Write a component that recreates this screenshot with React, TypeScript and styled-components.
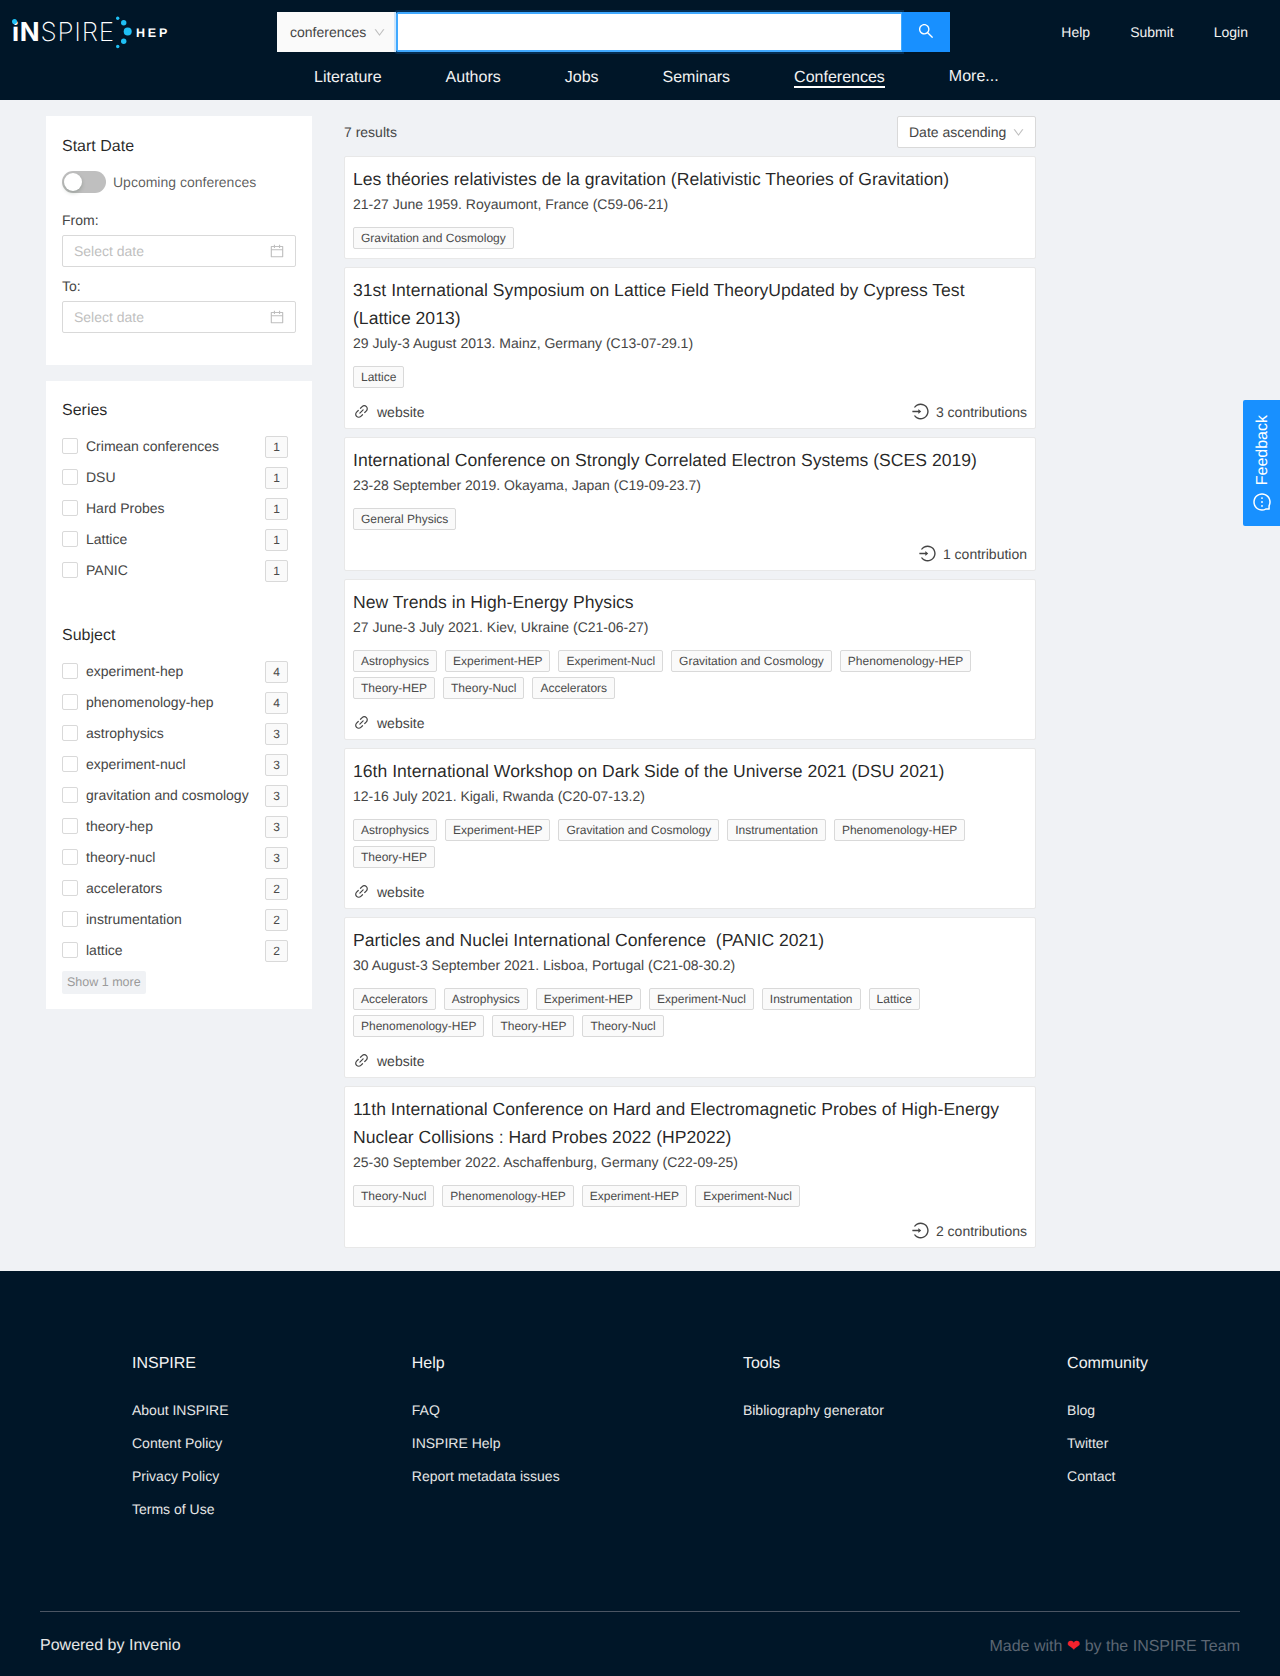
import React from 'react';
import styled, { createGlobalStyle } from 'styled-components';
import {
  AiOutlineCalendar,
  AiOutlineDown,
  AiOutlineLink,
  AiOutlineLogin,
  AiOutlineMessage,
  AiOutlineSearch,
} from 'react-icons/ai';

const GlobalStyle = createGlobalStyle`
  html, body {
    margin: 0;
    padding: 0;
    background: #f0f2f5;
    font-family: "Liberation Sans", Arial, sans-serif;
    font-size: 14px;
    line-height: 22px;
    color: rgba(0, 0, 0, 0.65);
    text-rendering: geometricPrecision;
    font-feature-settings: 'tnum';
  }
  * { box-sizing: border-box; }
`;

const Page = styled.div`
  position: relative;
  width: 1280px;
  min-height: 1676px;
`;

const Header = styled.header`
  height: 100px;
  background: #001628;
  display: grid;
  grid-template-columns: 277px 673px 1fr;
  grid-template-rows: 64px 36px;
`;

const LogoBox = styled.div`
  display: flex;
  align-items: center;
  padding: 2px 0 0 12px;
  color: #fff;
`;

const LogoWord = styled.span`
  font-family: Inter, "Liberation Sans", sans-serif;
  font-size: 26px;
  font-weight: 200;
  letter-spacing: 0.8px;
  line-height: 1;
  b { font-weight: 700; }
`;

const LogoI = styled.span`
  position: relative;
  &::before {
    content: '';
    position: absolute;
    top: 2px;
    left: 0;
    width: 5px;
    height: 5px;
    border-radius: 50%;
    background: #1fc0f5;
  }
`;

const LogoHep = styled.span`
  font-size: 12.5px;
  font-weight: 700;
  letter-spacing: 2.9px;
  margin-left: 3px;
`;

const SearchBar = styled.div`
  display: flex;
  height: 40px;
  margin-top: 12px;
`;

const ScopeSelect = styled.div`
  width: 119px;
  background: #fafafa;
  display: flex;
  align-items: center;
  justify-content: space-between;
  padding: 0 10px 0 13px;
  color: #454545;
  svg { color: #bfbfbf; font-size: 13px; }
`;

const SearchInput = styled.input`
  flex: 1;
  min-width: 0;
  border: 2px solid #40a9ff;
  border-right-width: 1px;
  border-radius: 2px 0 0 2px;
  background: #fff;
  box-shadow: 0 0 0 2px rgba(24, 144, 255, 0.2);
  outline: none;
`;

const SearchButton = styled.button`
  width: 48px;
  border: none;
  background: #1890ff;
  color: #fff;
  font-size: 18px;
  padding: 0 0 3px;
  display: flex;
  align-items: center;
  justify-content: center;
`;

const TopLinks = styled.nav`
  display: flex;
  justify-content: flex-end;
  gap: 40px;
  padding: 21px 32px 0 0;
  color: #f2f2f2;
`;

const MainNav = styled.nav`
  grid-column: 2 / 4;
  display: flex;
  gap: 64px;
  padding-left: 37px;
  font-size: 16px;
  color: #f2f2f2;
`;

const NavItem = styled.span<{ $active?: boolean; $raised?: boolean }>`
  height: 24px;
  line-height: 28px;
  border-bottom: ${p => (p.$active ? '2px solid #fff' : 'none')};
  margin-top: ${p => (p.$raised ? '-1px' : '0')};
`;

const Main = styled.main`
  display: flex;
  align-items: flex-start;
  gap: 32px;
  padding: 16px 0 23px 46px;
`;

const Sidebar = styled.aside`
  width: 266px;
  display: flex;
  flex-direction: column;
  gap: 16px;
`;

const Panel = styled.section`
  background: #fff;
  padding: 16px 16px 15px;
`;

const PanelTitle = styled.h3`
  margin: 0;
  padding-top: 2px;
  font-size: 16px;
  font-weight: 400;
  line-height: 24px;
  color: rgba(0, 0, 0, 0.85);
`;

const DateTitle = styled(PanelTitle)`
  padding-top: 3px;
`;

const ToggleRow = styled.div`
  display: flex;
  align-items: center;
  gap: 7px;
  margin-top: 12px;
`;

const Toggle = styled.span`
  position: relative;
  width: 44px;
  height: 22px;
  border-radius: 11px;
  background: #bfbfbf;
  &::after {
    content: '';
    position: absolute;
    top: 2px;
    left: 2px;
    width: 18px;
    height: 18px;
    border-radius: 50%;
    background: #fff;
    box-shadow: 0 2px 4px rgba(0, 35, 11, 0.2);
  }
`;

const FieldLabel = styled.div<{ $first?: boolean }>`
  color: #454545;
  margin-top: ${p => (p.$first ? '16px' : '8px')};
  height: 22px;
`;

const DateField = styled.div`
  height: 32px;
  margin-top: 4px;
  border: 1px solid #d9d9d9;
  border-radius: 2px;
  display: flex;
  align-items: center;
  justify-content: space-between;
  padding: 0 10px 0 11px;
  color: #bfbfbf;
  svg { font-size: 16px; color: #bfbfbf; }
`;

const DateGroup = styled.div`
  margin-bottom: 17px;
`;

const FilterList = styled.div`
  margin-top: 8px;
`;

const FilterRow = styled.div`
  display: flex;
  align-items: center;
  height: 31px;
  padding-right: 8px;
`;

const Checkbox = styled.span`
  width: 16px;
  height: 16px;
  border: 1px solid #d9d9d9;
  border-radius: 2px;
  background: #fff;
  margin-right: 8px;
  margin-top: -1px;
`;

const FilterLabel = styled.span`
  flex: 1;
  color: #454545;
  margin-top: -2px;
`;

const Count = styled.span`
  width: 23px;
  height: 22px;
  border: 1px solid #d9d9d9;
  border-radius: 2px;
  background: #fafafa;
  font-size: 12px;
  line-height: 20px;
  text-align: center;
  color: #4a4a4a;
`;

const ShowMore = styled.span`
  display: inline-block;
  height: 23px;
  line-height: 23px;
  margin-top: 5px;
  padding: 0 5px;
  border-radius: 2px;
  background: #f0f2f5;
  font-size: 12.5px;
  color: #9a9a9a;
`;

const SectionGap = styled.div`
  height: 36px;
`;

const Results = styled.div`
  width: 692px;
  display: flex;
  flex-direction: column;
  gap: 8px;
`;

const ResultsBar = styled.div`
  display: flex;
  align-items: center;
  justify-content: space-between;
  height: 32px;
  color: #454545;
`;

const SortSelect = styled.div`
  width: 139px;
  height: 32px;
  background: #fff;
  border: 1px solid #d9d9d9;
  border-radius: 2px;
  display: flex;
  align-items: center;
  justify-content: space-between;
  padding: 0 10px 0 11px;
  svg { color: #bfbfbf; font-size: 13px; }
`;

const Card = styled.article`
  background: #fff;
  border: 1px solid #e8e8e8;
  border-radius: 2px;
  padding: 8px 8px 5px;
`;

const CardTitle = styled.h2`
  margin: 0;
  font-size: 17.6px;
  font-weight: 400;
  line-height: 28px;
  color: rgba(0, 0, 0, 0.85);
`;

const CardMeta = styled.div`
  color: #454545;
`;

const Tags = styled.div`
  display: flex;
  flex-wrap: wrap;
  gap: 5px 8px;
  margin-top: 12px;
  margin-bottom: 4px;
`;

const Tag = styled.span`
  height: 22px;
  padding: 0 7px;
  border: 1px solid #d9d9d9;
  border-radius: 2px;
  background: #fafafa;
  font-size: 12px;
  line-height: 20px;
  color: #4a4a4a;
`;

const CardActions = styled.div`
  display: flex;
  align-items: center;
  justify-content: space-between;
  height: 22px;
  margin-top: 12.5px;
  margin-bottom: 0.5px;
  color: #454545;
`;

const LinkItem = styled.span`
  display: flex;
  align-items: center;
  gap: 7px;
  svg { font-size: 17px; }
`;

const ContributionItem = styled.span`
  display: flex;
  align-items: center;
  gap: 6px;
  svg { font-size: 19px; }
`;

const Feedback = styled.div`
  position: absolute;
  top: 400px;
  right: 0;
  width: 37px;
  height: 126px;
  background: #1890ff;
  border-radius: 2px 0 0 2px;
  color: #fff;
  display: flex;
  flex-direction: column-reverse;
  align-items: center;
  justify-content: flex-start;
  gap: 7px;
  padding: 14px 0;
  font-size: 16px;
  svg { font-size: 20px; transform: rotate(-90deg); }
`;

const FeedbackText = styled.span`
  writing-mode: vertical-rl;
  transform: rotate(180deg);
  line-height: 37px;
  margin-right: -1px;
`;

const Footer = styled.footer`
  height: 405px;
  background: #001628;
  padding: 81px 40px 0;
  color: #e6e6e6;
`;

const FooterColumns = styled.div`
  display: flex;
  justify-content: space-between;
  height: 259px;
  padding: 0 92px;
`;

const FooterTitle = styled.div`
  font-size: 16px;
  line-height: 24px;
  margin-bottom: 23px;
  color: #f2f2f2;
`;

const FooterLink = styled.div`
  height: 33px;
  line-height: 22px;
`;

const FooterBottom = styled.div`
  border-top: 1px solid #4b5563;
  display: flex;
  justify-content: space-between;
  padding-top: 22px;
  font-size: 16px;
  line-height: 24px;
`;

const MadeWith = styled.span`
  color: #5c6673;
`;

const Heart = styled.span`
  color: #f5222d;
  font-family: "DejaVu Sans", sans-serif;
`;

type Conference = {
  title: string;
  meta: string;
  tags: string[];
  website?: boolean;
  contributions?: string;
};

const conferences: Conference[] = [
  {
    title: 'Les théories relativistes de la gravitation (Relativistic Theories of Gravitation)',
    meta: '21-27 June 1959. Royaumont, France (C59-06-21)',
    tags: ['Gravitation and Cosmology'],
  },
  {
    title: '31st International Symposium on Lattice Field TheoryUpdated by Cypress Test (Lattice 2013)',
    meta: '29 July-3 August 2013. Mainz, Germany (C13-07-29.1)',
    tags: ['Lattice'],
    website: true,
    contributions: '3 contributions',
  },
  {
    title: 'International Conference on Strongly Correlated Electron Systems (SCES 2019)',
    meta: '23-28 September 2019. Okayama, Japan (C19-09-23.7)',
    tags: ['General Physics'],
    contributions: '1 contribution',
  },
  {
    title: 'New Trends in High-Energy Physics',
    meta: '27 June-3 July 2021. Kiev, Ukraine (C21-06-27)',
    tags: ['Astrophysics', 'Experiment-HEP', 'Experiment-Nucl', 'Gravitation and Cosmology', 'Phenomenology-HEP', 'Theory-HEP', 'Theory-Nucl', 'Accelerators'],
    website: true,
  },
  {
    title: '16th International Workshop on Dark Side of the Universe 2021 (DSU 2021)',
    meta: '12-16 July 2021. Kigali, Rwanda (C20-07-13.2)',
    tags: ['Astrophysics', 'Experiment-HEP', 'Gravitation and Cosmology', 'Instrumentation', 'Phenomenology-HEP', 'Theory-HEP'],
    website: true,
  },
  {
    title: 'Particles and Nuclei International Conference \u00a0(PANIC 2021)',
    meta: '30 August-3 September 2021. Lisboa, Portugal (C21-08-30.2)',
    tags: ['Accelerators', 'Astrophysics', 'Experiment-HEP', 'Experiment-Nucl', 'Instrumentation', 'Lattice', 'Phenomenology-HEP', 'Theory-HEP', 'Theory-Nucl'],
    website: true,
  },
  {
    title: '11th International Conference on Hard and Electromagnetic Probes of High-Energy Nuclear Collisions : Hard Probes 2022 (HP2022)',
    meta: '25-30 September 2022. Aschaffenburg, Germany (C22-09-25)',
    tags: ['Theory-Nucl', 'Phenomenology-HEP', 'Experiment-HEP', 'Experiment-Nucl'],
    contributions: '2 contributions',
  },
];

const series: [string, number][] = [
  ['Crimean conferences', 1],
  ['DSU', 1],
  ['Hard Probes', 1],
  ['Lattice', 1],
  ['PANIC', 1],
];

const subjects: [string, number][] = [
  ['experiment-hep', 4],
  ['phenomenology-hep', 4],
  ['astrophysics', 3],
  ['experiment-nucl', 3],
  ['gravitation and cosmology', 3],
  ['theory-hep', 3],
  ['theory-nucl', 3],
  ['accelerators', 2],
  ['instrumentation', 2],
  ['lattice', 2],
];

const footerColumns: [string, string[]][] = [
  ['INSPIRE', ['About INSPIRE', 'Content Policy', 'Privacy Policy', 'Terms of Use']],
  ['Help', ['FAQ', 'INSPIRE Help', 'Report metadata issues']],
  ['Tools', ['Bibliography generator']],
  ['Community', ['Blog', 'Twitter', 'Contact']],
];

const LogoDots = () => (
  <svg width="18" height="34" viewBox="0 0 18 34" fill="#1fc0f5">
    <circle cx="2.7" cy="2.2" r="1.7" />
    <circle cx="8.7" cy="6.8" r="2.7" />
    <circle cx="12.7" cy="15.5" r="4" />
    <circle cx="8.7" cy="25.2" r="2.7" />
    <circle cx="2.7" cy="30.5" r="1.7" />
  </svg>
);

const Filters = ({ items }: { items: [string, number][] }) => (
  <FilterList>
    {items.map(([label, count]) => (
      <FilterRow key={label}>
        <Checkbox />
        <FilterLabel>{label}</FilterLabel>
        <Count>{count}</Count>
      </FilterRow>
    ))}
  </FilterList>
);

const App: React.FC = () => (
  <Page>
    <GlobalStyle />
    <Header>
      <LogoBox>
        <LogoWord>
          <b>
            <LogoI>i</LogoI>N
          </b>
          SPIRE
        </LogoWord>
        <LogoDots />
        <LogoHep>HEP</LogoHep>
      </LogoBox>
      <SearchBar>
        <ScopeSelect>
          conferences <AiOutlineDown />
        </ScopeSelect>
        <SearchInput />
        <SearchButton>
          <AiOutlineSearch />
        </SearchButton>
      </SearchBar>
      <TopLinks>
        <span>Help</span>
        <span>Submit</span>
        <span>Login</span>
      </TopLinks>
      <MainNav>
        <NavItem>Literature</NavItem>
        <NavItem>Authors</NavItem>
        <NavItem>Jobs</NavItem>
        <NavItem>Seminars</NavItem>
        <NavItem $active>Conferences</NavItem>
        <NavItem $raised>More...</NavItem>
      </MainNav>
    </Header>

    <Main>
      <Sidebar>
        <Panel>
          <DateTitle>Start Date</DateTitle>
          <ToggleRow>
            <Toggle />
            Upcoming conferences
          </ToggleRow>
          <DateGroup>
            <FieldLabel $first>From:</FieldLabel>
            <DateField>
              Select date <AiOutlineCalendar />
            </DateField>
            <FieldLabel>To:</FieldLabel>
            <DateField>
              Select date <AiOutlineCalendar />
            </DateField>
          </DateGroup>
        </Panel>
        <Panel>
          <PanelTitle>Series</PanelTitle>
          <Filters items={series} />
          <SectionGap />
          <PanelTitle>Subject</PanelTitle>
          <Filters items={subjects} />
          <ShowMore>Show 1 more</ShowMore>
        </Panel>
      </Sidebar>

      <Results>
        <ResultsBar>
          7 results
          <SortSelect>
            Date ascending <AiOutlineDown />
          </SortSelect>
        </ResultsBar>
        {conferences.map(conference => (
          <Card key={conference.meta}>
            <CardTitle>{conference.title}</CardTitle>
            <CardMeta>{conference.meta}</CardMeta>
            <Tags>
              {conference.tags.map(tag => (
                <Tag key={tag}>{tag}</Tag>
              ))}
            </Tags>
            {(conference.website || conference.contributions) && (
              <CardActions>
                {conference.website ? (
                  <LinkItem>
                    <AiOutlineLink /> website
                  </LinkItem>
                ) : (
                  <span />
                )}
                {conference.contributions && (
                  <ContributionItem>
                    <AiOutlineLogin /> {conference.contributions}
                  </ContributionItem>
                )}
              </CardActions>
            )}
          </Card>
        ))}
      </Results>
    </Main>

    <Footer>
      <FooterColumns>
        {footerColumns.map(([title, links]) => (
          <div key={title}>
            <FooterTitle>{title}</FooterTitle>
            {links.map(link => (
              <FooterLink key={link}>{link}</FooterLink>
            ))}
          </div>
        ))}
      </FooterColumns>
      <FooterBottom>
        <span>Powered by Invenio</span>
        <MadeWith>
          Made with <Heart>❤</Heart> by the INSPIRE Team
        </MadeWith>
      </FooterBottom>
    </Footer>

    <Feedback>
      <AiOutlineMessage />
      <FeedbackText>Feedback</FeedbackText>
    </Feedback>
  </Page>
);

export default App;
